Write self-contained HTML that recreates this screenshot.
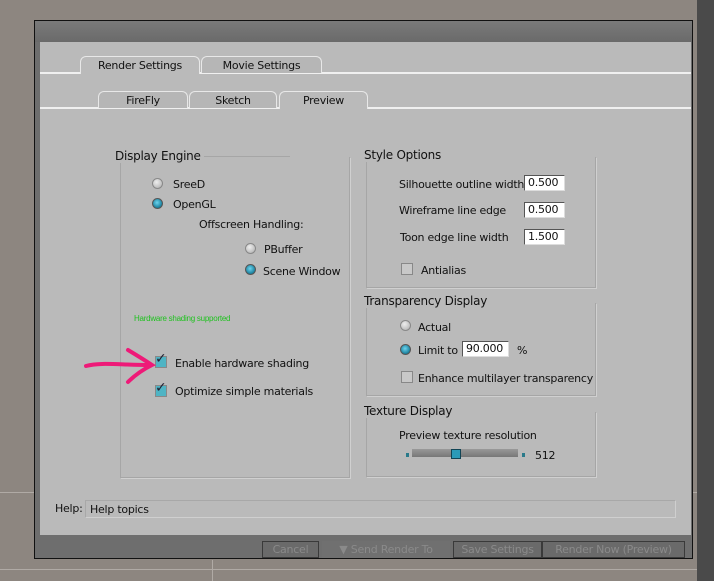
<!DOCTYPE html><html><head><style>
body{margin:0;width:714px;height:581px;background:#8d8680;position:relative;overflow:hidden;font-family:"DejaVu Sans","Liberation Sans",sans-serif;font-size:11px;letter-spacing:-0.25px;color:#111}
.a{position:absolute}
.t{position:absolute;white-space:nowrap}
.grp{position:absolute;border:1px solid #a6a6a6;box-shadow:1px 1px 0 #d0d0d0}
.lg{position:absolute;font-size:12px;background:#bababa;padding-right:3px}
.rad{position:absolute;width:9px;height:9px;border-radius:50%;background:radial-gradient(circle at 40% 35%,#eee,#aaa);border:1px solid #888}
.rad.on{background:radial-gradient(circle at 45% 40%,#6cd4ee,#1a7f9c 70%);border-color:#555}
.cb{position:absolute;width:10px;height:10px;border:1px solid #888;background:#c8c8c8}
.inp{position:absolute;background:#fff;border:1px solid #555;border-right-color:#ddd;border-bottom-color:#ddd;height:14px;line-height:14px;padding-left:3px;font-size:11px}
.tab{position:absolute;border:1px solid #e8e8e8;border-bottom:none;border-radius:6px 6px 0 0;background:#b6b6b6;text-align:center;height:16px;line-height:18px}
.btn{position:absolute;top:541px;height:15px;line-height:15px;background:#6a6a6a;border:1px solid #3a3a3a;color:#8a8a8a;text-align:center;font-size:11px}
</style></head><body>
<div class="a" style="left:0;top:492px;width:714px;height:1px;background:#b0aaa5"></div>
<div class="a" style="left:0;top:569px;width:714px;height:1px;background:#b0aaa5"></div>
<div class="a" style="left:212px;top:560px;width:1px;height:21px;background:#b0aaa5"></div>
<div class="a" style="left:697px;top:0;width:17px;height:581px;background:#4a4a4a"></div>
<div class="a" style="left:34px;top:20px;width:659px;height:539px;background:#6e6e6e;border:1px solid #111;box-sizing:border-box"></div>
<div class="a" style="left:35px;top:21px;width:657px;height:21px;background:linear-gradient(#7a7a7a,#6a6a6a)"></div>
<div class="a" style="left:40px;top:42px;width:651px;height:493px;background:#bababa"></div>
<div class="a" style="left:40px;top:72px;width:651px;height:2px;background:#f0f0f0"></div>
<div class="a" style="left:40px;top:107px;width:651px;height:2px;background:#f0f0f0"></div>
<div class="tab" style="left:80px;top:56px;width:118px;height:17px;background:#bababa">Render Settings</div>
<div class="a" style="left:81px;top:72px;width:116px;height:3px;background:#bababa"></div>
<div class="tab" style="left:201px;top:56px;width:119px">Movie Settings</div>
<div class="tab" style="left:98px;top:91px;width:88px">FireFly</div>
<div class="tab" style="left:189px;top:91px;width:86px">Sketch</div>
<div class="tab" style="left:279px;top:91px;width:87px;height:17px;background:#bababa">Preview</div>
<div class="a" style="left:280px;top:106px;width:85px;height:4px;background:#bababa"></div>
<!-- left group -->
<div class="grp" style="left:120px;top:157px;width:228px;height:320px;border-top:none"></div>
<div class="a" style="left:200px;top:156px;width:90px;height:1px;background:#a6a6a6"></div>
<div class="lg" style="left:115px;top:149px">Display Engine</div>
<div class="rad" style="left:152px;top:178px"></div><div class="t" style="left:173px;top:178px">SreeD</div>
<div class="rad on" style="left:152px;top:198px"></div><div class="t" style="left:173px;top:198px">OpenGL</div>
<div class="t" style="left:199px;top:218px">Offscreen Handling:</div>
<div class="rad" style="left:245px;top:243px"></div><div class="t" style="left:264px;top:243px">PBuffer</div>
<div class="rad on" style="left:245px;top:264px"></div><div class="t" style="left:263px;top:265px">Scene Window</div>
<div class="t" style="left:134px;top:314px;font-size:8px;color:#1fc21f;font-family:'Liberation Sans',sans-serif">Hardware shading supported</div>
<div class="cb" style="left:155px;top:356px;background:#4fb4c4"></div><div class="t" style="left:155px;top:351px;font-size:14px;color:#223">✓</div>
<div class="t" style="left:175px;top:357px">Enable hardware shading</div>
<div class="cb" style="left:155px;top:385px;background:#4fb4c4"></div><div class="t" style="left:155px;top:380px;font-size:14px;color:#223">✓</div>
<div class="t" style="left:175px;top:385px">Optimize simple materials</div>
<svg class="a" style="left:80px;top:340px" width="80" height="45"><path d="M6 26 C20 22 40 25 70 25 M48 10 C58 16 66 21 72 25 C62 30 55 35 48 42" stroke="#ee1a78" stroke-width="4" fill="none" stroke-linecap="round"/></svg>
<!-- style options -->
<div class="grp" style="left:366px;top:157px;width:228px;height:130px;border-top:none"></div>
<div class="lg" style="left:364px;top:148px">Style Options</div>
<div class="t" style="left:399px;top:178px">Silhouette outline width</div><div class="inp" style="left:524px;top:175px;width:36px">0.500</div>
<div class="t" style="left:399px;top:204px">Wireframe line edge</div><div class="inp" style="left:524px;top:202px;width:36px">0.500</div>
<div class="t" style="left:400px;top:231px">Toon edge line width</div><div class="inp" style="left:524px;top:229px;width:36px">1.500</div>
<div class="cb" style="left:401px;top:263px"></div><div class="t" style="left:421px;top:264px">Antialias</div>
<div class="grp" style="left:366px;top:303px;width:228px;height:92px;border-top:none"></div>
<div class="lg" style="left:364px;top:294px">Transparency Display</div>
<div class="rad" style="left:400px;top:320px"></div><div class="t" style="left:418px;top:321px">Actual</div>
<div class="rad on" style="left:400px;top:344px"></div><div class="t" style="left:418px;top:344px">Limit to</div>
<div class="inp" style="left:462px;top:341px;width:42px">90.000</div><div class="t" style="left:517px;top:344px">%</div>
<div class="cb" style="left:401px;top:371px"></div><div class="t" style="left:418px;top:372px">Enhance multilayer transparency</div>
<div class="grp" style="left:366px;top:412px;width:228px;height:64px;border-top:none"></div>
<div class="lg" style="left:364px;top:404px">Texture Display</div>
<div class="t" style="left:399px;top:429px">Preview texture resolution</div>
<div class="a" style="left:406px;top:453px;width:3px;height:4px;background:#2a7a8a"></div>
<div class="a" style="left:412px;top:449px;width:106px;height:8px;background:linear-gradient(#999,#777)"></div>
<div class="a" style="left:451px;top:449px;width:8px;height:8px;background:#2a9ab8;border:1px solid #145"></div>
<div class="a" style="left:522px;top:453px;width:3px;height:4px;background:#2a7a8a"></div>
<div class="t" style="left:535px;top:449px">512</div>
<!-- help -->
<div class="t" style="left:55px;top:502px">Help:</div>
<div class="a" style="left:85px;top:500px;width:589px;height:16px;border:1px solid #cfcfcf;border-top-color:#a8a8a8;border-left-color:#a8a8a8"></div>
<div class="t" style="left:90px;top:503px">Help topics</div>
<div class="btn" style="left:262px;width:55px">Cancel</div>
<div class="btn" style="left:322px;width:126px;background:#707070;border-color:#707070">▼ Send Render To</div>
<div class="btn" style="left:453px;width:87px">Save Settings</div>
<div class="btn" style="left:542px;width:141px">Render Now (Preview)</div>
</body></html>
